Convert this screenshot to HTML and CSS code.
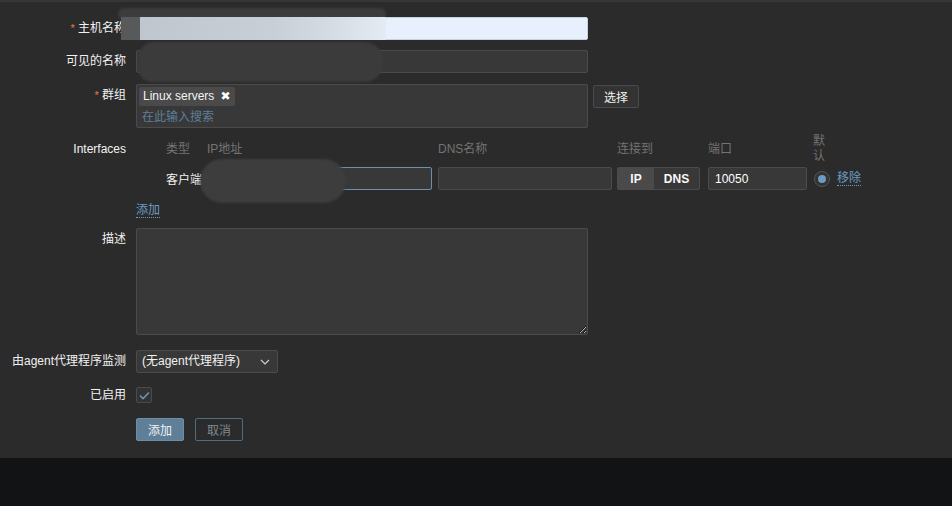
FILE: index.html
```html
<!DOCTYPE html>
<html lang="zh-CN">
<head>
<meta charset="utf-8">
<title>主机</title>
<link rel="stylesheet" href="styles.css">
</head>
<body>
<div class="panel">
  <form class="form">
    <div class="row r1">
      <label class="label"><span class="req">*</span> 主机名称</label>
      <div class="field"><input class="input input-auto w452" type="text" value=""></div>
    </div>
    <div class="row r2">
      <label class="label">可见的名称</label>
      <div class="field"><input class="input w452" type="text" value=""></div>
    </div>
    <div class="row r3">
      <label class="label"><span class="req">*</span> 群组</label>
      <div class="field field-inline">
        <div class="multi">
          <span class="chip">Linux servers <span class="chip-x">✖</span></span>
          <span class="placeholder">在此输入搜索</span>
        </div>
        <button type="button" class="btn-grey">选择</button>
      </div>
    </div>
    <div class="row r4">
      <label class="label label-if">Interfaces</label>
      <div class="field">
        <div class="iface">
          <div class="th">类型</div>
          <div class="th">IP地址</div>
          <div class="th">DNS名称</div>
          <div class="th">连接到</div>
          <div class="th">端口</div>
          <div class="th th-def">默<br>认</div>
          <div class="th"></div>

          <div class="td td-type">客户端</div>
          <div class="td"><input class="input input-focus w225" type="text" value=""></div>
          <div class="td"><input class="input w174" type="text" value=""></div>
          <div class="td">
            <div class="seg"><span class="seg-i on">IP</span><span class="seg-i">DNS</span></div>
          </div>
          <div class="td"><input class="input w99 port" type="text" value="10050"></div>
          <div class="td"><span class="radio"><span class="radio-dot"></span></span></div>
          <div class="td"><a class="link">移除</a></div>
        </div>
        <div class="add-row"><a class="link">添加</a></div>
      </div>
    </div>
    <div class="row r5">
      <label class="label">描述</label>
      <div class="field"><textarea class="textarea"></textarea></div>
    </div>
    <div class="row r6">
      <label class="label">由agent代理程序监测</label>
      <div class="field">
        <div class="select">(无agent代理程序)
          <svg class="chev" width="10" height="6" viewBox="0 0 10 6"><path d="M1 1 L5 5 L9 1" fill="none" stroke="#d0d0d0" stroke-width="1.2"/></svg>
        </div>
      </div>
    </div>
    <div class="row r7">
      <label class="label label-cb">已启用</label>
      <div class="field">
        <span class="checkbox">
          <svg width="11" height="9" viewBox="0 0 11 9"><path d="M1 4.5 L4 7.5 L10 1.5" fill="none" stroke="#6c93b4" stroke-width="1.6"/></svg>
        </span>
      </div>
    </div>
    <div class="row r8">
      <div class="label"></div>
      <div class="field field-inline gap11">
        <button type="button" class="btn-primary">添加</button>
        <button type="button" class="btn-outline">取消</button>
      </div>
    </div>
  </form>

  <div class="smudge s1a"></div>
  <div class="smudge s1b"></div>
  <div class="smudge s1c"></div>
  <div class="smudge s2"></div>
  <div class="smudge s3"></div>
</div>
<div class="footer"></div>
</body>
</html>
```
FILE: styles.css
```css
* { box-sizing: border-box; }
html, body { margin: 0; padding: 0; }
body {
  background: #121314;
  font-family: "Liberation Sans", Arial, "Noto Sans CJK SC", sans-serif;
  font-size: 12px;
  color: #f2f2f2;
  width: 952px;
  height: 506px;
  overflow: hidden;
}
.panel {
  position: relative;
  height: 458px;
  background: #2b2b2b;
  border-top: 2px solid #363636;
}
.form { display: flex; flex-direction: column; }
.row { display: flex; align-items: flex-start; }
.label {
  width: 136px;
  flex: none;
  padding-right: 10px;
  text-align: right;
  line-height: 23px;
  color: #f2f2f2;
  white-space: nowrap;
}
.req { color: #e07f3d; font-size: 11px; }
.field { flex: 1; }
.field-inline { display: flex; align-items: flex-start; gap: 5px; }
.gap11 { gap: 11px; }

.r1 { margin-top: 15px; }
.r2 { margin-top: 10px; }
.r3 { margin-top: 11px; }
.r4 { margin-top: 9px; }
.r5 { margin-top: 10px; }
.r6 { margin-top: 15px; }
.r7 { margin-top: 14px; }
.r8 { margin-top: 15px; }

.input {
  display: block;
  height: 23px;
  background: #383838;
  border: 1px solid #4b4b4b;
  border-radius: 2px;
  color: #f2f2f2;
  font: inherit;
  padding: 0 6px;
  outline: none;
}
.input-auto { background: #e8f0fe; border-color: #c9d3df; }
.input-focus { border-color: #6b8fae; }
.w452 { width: 452px; }
.w225 { width: 225px; }
.w174 { width: 174px; }
.w99 { width: 99px; }
.port { color: #ffffff; }

.multi {
  width: 452px;
  height: 44px;
  background: #383838;
  border: 1px solid #4b4b4b;
  border-radius: 2px;
  padding: 2px 2px;
  display: flex;
  flex-direction: column;
  align-items: flex-start;
}
.chip {
  display: inline-flex;
  align-items: center;
  height: 19px;
  padding: 0 5px 0 4px;
  background: #4a4a4a;
  border-radius: 2px;
  color: #f4f4f4;
  line-height: 19px;
  white-space: nowrap;
}
.chip-x { font-size: 12px; margin-left: 6px; color: #ffffff; font-weight: bold; font-family: "DejaVu Sans", sans-serif; }
.placeholder { color: #5d7f98; margin-top: 2px; padding-left: 3px; line-height: 18px; }

.btn-grey {
  height: 23px;
  margin-top: 1px;
  padding: 0 10px;
  background: #333333;
  border: 1px solid #4b4b4b;
  border-radius: 2px;
  color: #f2f2f2;
  font: inherit;
}

.label-if { line-height: 24px; }
.iface {
  display: grid;
  grid-template-columns: 41px 231px 179px 91px 105px 24px auto;
  grid-template-rows: 24px 23px;
  row-gap: 6px;
  padding-left: 30px;
}
.th {
  color: #737373;
  display: flex;
  align-items: center;
  line-height: 15px;
  white-space: nowrap;
}
.th-def { margin: -4px 0; }
.td { display: flex; align-items: center; white-space: nowrap; }
.td-type { color: #f2f2f2; }

.seg {
  display: flex;
  height: 23px;
  width: 83px;
  border: 1px solid #4b4b4b;
  border-radius: 2px;
  overflow: hidden;
  background: #383838;
}
.seg-i {
  flex: 1;
  display: flex;
  align-items: center;
  justify-content: center;
  color: #f8f8f8;
  font-weight: bold;
}
.seg-i.on { flex: 0 0 36px; background: #4a4a4a; }

.radio {
  width: 16px;
  height: 16px;
  border-radius: 50%;
  border: 1px solid #555555;
  background: #333333;
  display: flex;
  align-items: center;
  justify-content: center;
  margin-left: 1px;
}
.radio-dot { width: 8px; height: 8px; border-radius: 50%; background: #6c9bc3; }

.link {
  color: #6c9bc3;
  border-bottom: 1px dotted #6c9bc3;
  line-height: 14px;
  cursor: pointer;
}
.add-row { margin-top: 12px; line-height: 16px; }

.textarea {
  display: block;
  width: 452px;
  height: 107px;
  background: #383838;
  border: 1px solid #4b4b4b;
  border-radius: 2px;
  color: #f2f2f2;
  font: inherit;
  color-scheme: dark;
  outline: none;
}

.select {
  position: relative;
  width: 142px;
  height: 23px;
  line-height: 21px;
  background: #383838;
  border: 1px solid #4b4b4b;
  border-radius: 2px;
  padding-left: 5px;
  color: #f2f2f2;
  white-space: nowrap;
}
.chev { position: absolute; right: 7px; top: 8px; }

.label-cb { line-height: 16px; }
.checkbox {
  display: flex;
  align-items: center;
  justify-content: center;
  width: 16px;
  height: 16px;
  background: #333333;
  border: 1px solid #4b4b4b;
  border-radius: 2px;
}

.btn-primary {
  height: 23px;
  width: 48px;
  background: #5f7f98;
  border: 1px solid #6e8ea7;
  border-radius: 2px;
  color: #f2f2f2;
  font: inherit;
}
.btn-outline {
  height: 23px;
  width: 48px;
  background: transparent;
  border: 1px solid #4f6c82;
  border-radius: 2px;
  color: #7e8a93;
  font: inherit;
}

.smudge { position: absolute; pointer-events: none; }
.s1a { left: 118px; top: 6px; width: 268px; height: 12px; background: #3c3c3c; border-radius: 8px; filter: blur(1px); }
.s1b { left: 121px; top: 15px; width: 21px; height: 23px; background: #58595b; filter: blur(0.6px); }
.s1c { left: 140px; top: 15px; width: 246px; height: 23px; background: linear-gradient(to right, #bfc6cd, #c8cfd6 55%, #d6dde4 80%, #e4ebf3); }
.s2 { left: 138px; top: 40px; width: 246px; height: 40px; background: #3b3b3b; border-radius: 16px 20px 20px 14px; filter: blur(1px); }
.s3 { left: 200px; top: 157px; width: 146px; height: 44px; background: #3d3d3d; border-radius: 22px; filter: blur(1px); }

.footer { height: 48px; background: #121314; }
```
